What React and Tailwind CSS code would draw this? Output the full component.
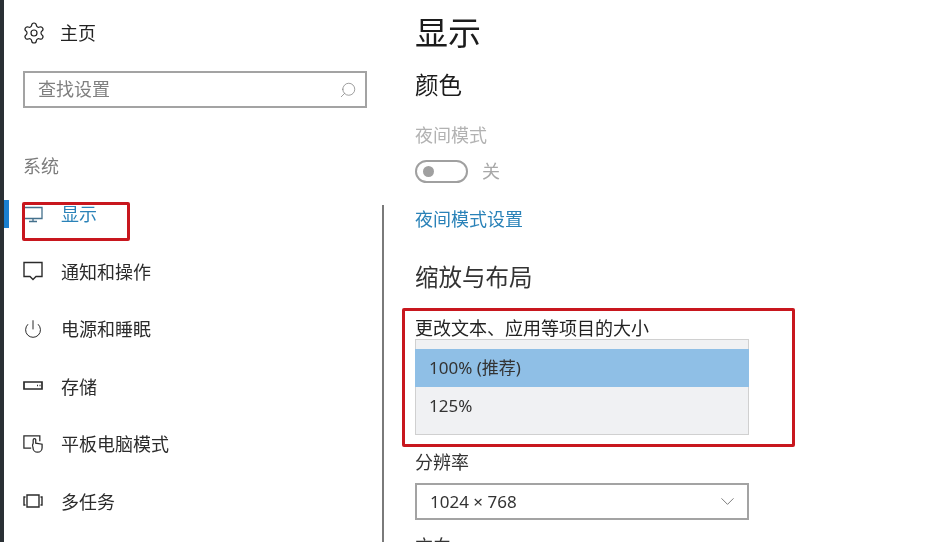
import React from "react";
import { ChevronDown, Power, Search, Settings } from "lucide-react";

const MonitorIcon = () => (
  <svg width="20" height="20" viewBox="0 0 20 20" fill="none" stroke="currentColor" strokeWidth="1.3">
    <path d="M1 3.5h18v11H1zM10 14.5v3M6 17.5h8" />
  </svg>
);

const ChatIcon = () => (
  <svg width="20" height="20" viewBox="0 0 20 20" fill="none" stroke="currentColor" strokeWidth="1.4">
    <path d="M1 1.5h18v14h-6L10 18.5l-3-3H1z" />
  </svg>
);

const StorageIcon = () => (
  <svg width="20" height="20" viewBox="0 0 20 20" fill="none" stroke="currentColor" strokeWidth="1.7">
    <path d="M1 6h18v7H1z" />
    <path d="M14 9.5h1M16.5 9.5h1" />
  </svg>
);

const TabletIcon = () => (
  <svg width="22" height="20" viewBox="0 0 22 20" fill="none" stroke="currentColor" strokeWidth="1.4">
    <path d="M9 14.5H1V1h17.5v6" />
    <path d="M10.2 9V5.5a1.4 1.4 0 0 1 2.8 0V9l7 1.2V14a5 5 0 0 1-10 0 5 5 0 0 1 .2-5z" transform="translate(1 0)" fill="white" />
  </svg>
);

const MultitaskIcon = () => (
  <svg width="20" height="20" viewBox="0 0 20 20" fill="none" stroke="currentColor" strokeWidth="1.4">
    <path d="M4 4h12v12H4zM2.5 6H1v8h1.5M17.5 6H19v8h-1.5" />
  </svg>
);

const navItems = [
  { label: "显示", icon: MonitorIcon, active: true },
  { label: "通知和操作", icon: ChatIcon },
  { label: "电源和睡眠", icon: () => <Power size={24} strokeWidth={1.2} /> },
  { label: "存储", icon: StorageIcon },
  { label: "平板电脑模式", icon: TabletIcon },
  { label: "多任务", icon: MultitaskIcon },
];

const Sidebar = () => (
  <aside className="w-[378px] shrink-0">
    <div className="h-[66px] pl-[18px] flex items-center gap-[14px] text-[#222]">
      <Settings size={24} strokeWidth={1.2} />
      <span>主页</span>
    </div>
    <div className="ml-[19px] mt-[5px] w-[344px] h-[37px] border-2 border-[#a3a3a3] pl-[13px] pr-[8px] flex items-center justify-between text-[#808080]">
      <span>查找设置</span>
      <Search size={18} strokeWidth={1} className="-scale-x-100" />
    </div>
    <div className="ml-[19px] mt-[43px] h-[30px] leading-[30px] text-[#7c7c7c]">系统</div>
    <nav className="mt-[4px]">
      {navItems.map(({ label, icon: Icon, active }) => (
        <div
          key={label}
          className={`relative h-[57.5px] pl-[19px] flex items-center gap-[18px] ${active ? "text-[#2a82b8]" : "text-[#2b2b2b]"}`}
        >
          {active && <span className="absolute left-0 top-[15px] w-[5px] h-[28px] bg-[#1a7fd0]" />}
          <span className={active ? "w-5 flex justify-center text-[#44708c]" : "w-5 flex justify-center"}>
            <Icon />
          </span>
          <span className="pt-[2px]">{label}</span>
        </div>
      ))}
    </nav>
  </aside>
);

const Main = () => (
  <main className="ml-[31px] w-[334px] shrink-0 text-[#222]">
    <h1 className="h-[66px] leading-[66px] text-[33px] text-[#1c1c1c]">显示</h1>
    <h2 className="mt-[1px] h-[36px] leading-[36px] text-[23.5px] text-[#1c1c1c]">颜色</h2>
    <div className="mt-[18px] h-[28px] leading-[28px] text-[#b2b2b2]">夜间模式</div>
    <div className="mt-[11px] h-[23px] flex items-center gap-[14px] text-[#a8a8a8]">
      <span className="w-[53px] h-[23px] rounded-full border-2 border-[#a0a0a0] pl-[6px] flex items-center">
        <span className="w-[11px] h-[11px] rounded-full bg-[#a0a0a0]" />
      </span>
      <span>关</span>
    </div>
    <div className="mt-[22px] h-[28px] leading-[28px] text-[#2a82b8]">夜间模式设置</div>
    <h2 className="mt-[26px] h-[36px] leading-[36px] text-[23.5px] text-[#333]">缩放与布局</h2>
    <div className="mt-[19px] h-[28px] leading-[28px] text-[#222]">更改文本、应用等项目的大小</div>
    <div className="-mt-[3px] h-[96px] pt-[9px] bg-[#f0f1f3] border border-[#d0d0d0] text-[17px] text-[#333]">
      <div className="h-[38px] -mx-px pl-[14px] flex items-center bg-[#8fbfe6]">100% (推荐)</div>
      <div className="h-[38px] pl-[13px] flex items-center">125%</div>
    </div>
    <div className="mt-[13px] h-[28px] leading-[28px] text-[#333]">分辨率</div>
    <div className="mt-[7px] h-[37px] border-2 border-[#a3a3a3] pl-[13px] pr-[8px] flex items-center justify-between text-[17px] text-[#333]">
      <span>1024 × 768</span>
      <ChevronDown size={23} strokeWidth={1} className="text-[#777]" />
    </div>
    <div className="mt-[12px] h-[28px] leading-[28px] text-[#333]">方向</div>
  </main>
);

export default function App() {
  return (
    <div
      className="relative w-[938px] h-[542px] overflow-hidden bg-white flex text-[18px] blur-[0.5px]"
      style={{ fontFamily: '"Noto Sans", "Noto Sans CJK SC", sans-serif' }}
    >
      <div className="w-1 shrink-0 bg-[#2a3035]" />
      <Sidebar />
      <div className="w-[2px] shrink-0 mt-[205px] bg-[#7a7a7a]" />
      <Main />
      <div className="absolute left-[22px] top-[202px] w-[108px] h-[39px] border-[3px] border-[#c8171e] rounded-[2px]" />
      <div className="absolute left-[402px] top-[308px] w-[393px] h-[139px] border-[3px] border-[#c8171e] rounded-[2px]" />
    </div>
  );
}
